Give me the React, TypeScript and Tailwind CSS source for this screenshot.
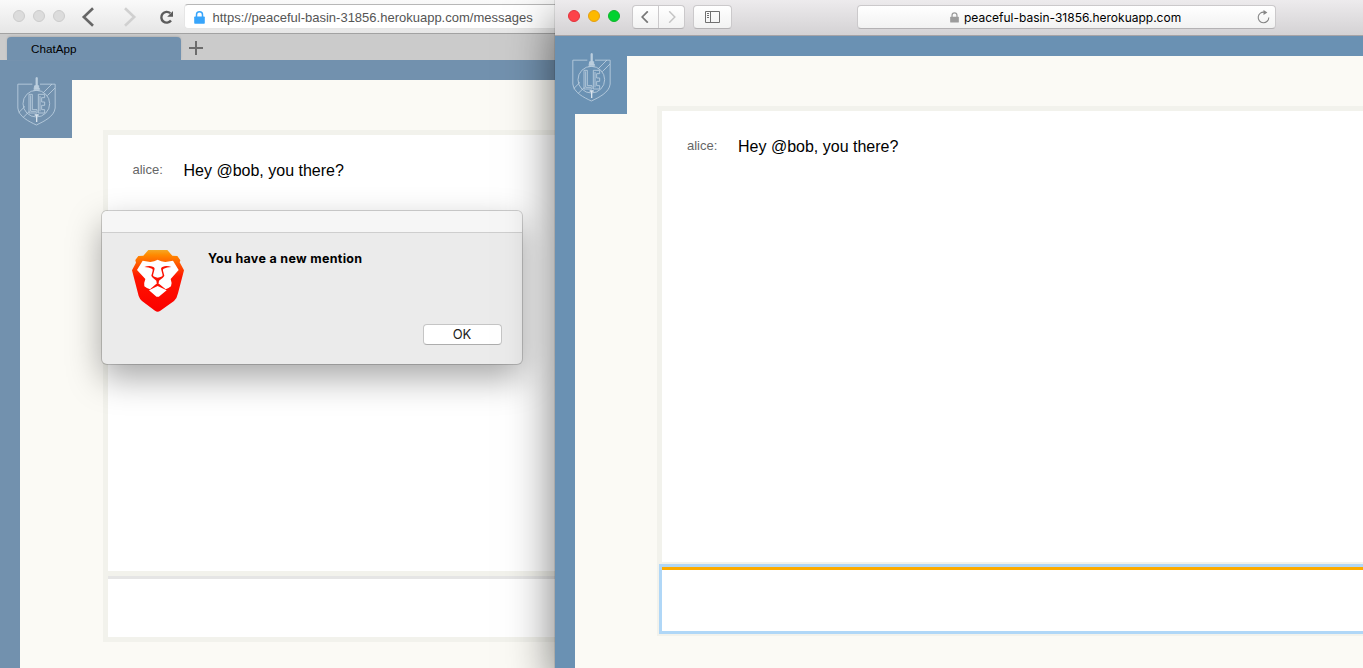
import React from "react";

function Crest() {
  return (
    <svg width="40" height="50" viewBox="0 0 120 150" fill="none" stroke="#bccede" strokeWidth="2.6" className="block">
      <path d="M49 24.5H5.5V96C8 122 40 137 61 147C82 137 115 122 117.5 96V24.5H72" />
      <circle cx="61" cy="83" r="40" />
      <path d="M82 50L108 24M94 59L117 36M8 110L27 91M22 124L40 106" />
      <path d="M39 55H49V101H63V111H39ZM44 58V106H60M67 55H86V65H77V78H86V88H77V101H86V111H67ZM72 60V106" />
      <path d="M60 5H64V34H60ZM56 29H68V34L71 40H54ZM52 43H71" fill="#bccede" />
      <path d="M56 117H68M62 117V138" strokeWidth="4" stroke="#dbe5ee" />
    </svg>
  );
}

function Lion() {
  return (
    <svg width="56" height="66" viewBox="120 144 168 198" className="block">
      <defs>
        <linearGradient id="mane" x1="0" y1="150" x2="0" y2="336" gradientUnits="userSpaceOnUse">
          <stop offset="0" stopColor="#f3a826" />
          <stop offset="0.08" stopColor="#ff8a00" />
          <stop offset="0.43" stopColor="#ff1500" />
          <stop offset="1" stopColor="#fb0000" />
        </linearGradient>
      </defs>
      <path
        d="M175 150H232L247 167L262 168L271 181L269 187L282 211L264 280Q261 295 252 303L211 332Q203 338 195 332L156 303Q149 297 146 288L126 211L138 188L136 180L145 168L160 167Z"
        fill="url(#mane)"
      />
      <path
        d="M158 182L181 186Q193 184 203 179Q213 184 226 186L249 182L266 210L242 237Q247 249 243 259Q236 265 227 268L205 250L203 247L201 250L180 268Q170 265 163 259Q161 249 166 237L141 210Z"
        fill="#fff"
      />
      <path d="M203 258L230 271L210 287Q203 294 196 287L177 271Z" fill="#fff" />
      <path
        d="M163 201Q177 196 188 200Q196 203 193 210L189 226Q191 232 203 233Q216 232 218 226L214 210Q211 203 219 200Q230 196 244 201Q230 202 221 206Q218 208 219 212L223 227Q222 231 207 242L206 249H200L199 242Q185 231 184 227L188 212Q189 208 186 206Q177 202 163 201Z"
        fill="#fb1200"
      />
    </svg>
  );
}

function Padlock({ className }: { className: string }) {
  return (
    <svg viewBox="0 0 11 13" className={className}>
      <path d="M2.5 6V3.8a3 3 0 0 1 6 0V6" fill="none" stroke="currentColor" strokeWidth="1.5" />
      <rect x="0.2" y="5.5" width="10.6" height="7.2" rx="0.8" fill="currentColor" />
    </svg>
  );
}

function Message() {
  return (
    <div className="flex whitespace-nowrap pt-[24px]">
      <span className="w-[51px] text-[13px] leading-[22px] text-[#666]">alice:</span>
      <span className="text-[16px] leading-[24px] text-black">Hey @bob, you there?</span>
    </div>
  );
}

function LeftPage() {
  return (
    <div className="flex h-[608px] bg-[#7291ae]">
      <div className="w-[20px] shrink-0" />
      <div className="relative mt-[20px] flex-1 bg-[#fbfaf5] pl-[83px] pt-[50px]">
        <div className="absolute -left-[20px] top-0 h-[58px] w-[72px] bg-[#7291ae] pl-[16px]">
          <div className="-mt-[4px]"><Crest /></div>
        </div>
        <div className="h-[512px] border-y-[5px] border-l-[5px] border-[#f2f2ec] bg-white">
          <div className="h-[436px] pl-[24.5px]"><Message /></div>
          <div className="h-[5px] bg-[#f2f2ec]" />
          <div className="h-[3px] bg-[#e5e5e5]" />
        </div>
      </div>
    </div>
  );
}

function RightPage() {
  return (
    <div className="flex h-[632px] bg-[#6a91b3]">
      <div className="w-[20px] shrink-0" />
      <div className="relative mt-[20px] flex-1 bg-[#fbfaf5] pl-[82px] pt-[50px]">
        <div className="absolute -left-[20px] top-0 h-[58px] w-[72px] bg-[#6a91b3] pl-[16px]">
          <div className="-mt-[4px]"><Crest /></div>
        </div>
        <div className="h-[530px] border-y-[5px] border-l-[5px] border-[#f2f2ec] bg-white">
          <div className="h-[451px] pl-[25px]"><Message /></div>
          <div className="h-[5px] bg-[#f2f2ec]" />
          <div className="h-[64px] border-t-[3px] border-[#fbab00] bg-white shadow-[0_0_0_3px_#b0d7f7]" />
        </div>
      </div>
    </div>
  );
}

function LeftWindow() {
  return (
    <div className="w-[555px] shrink-0 overflow-hidden">
      <div className="flex h-[34px] items-center border-b border-[#a2a2a2] bg-linear-to-b from-[#fafafa] to-[#e6e6e6]">
        <div className="flex gap-[8px] pb-px pl-[13px]">
          <i className="size-[12px] rounded-full border border-[#cccccc] bg-[#dcdcdc]" />
          <i className="size-[12px] rounded-full border border-[#cccccc] bg-[#dcdcdc]" />
          <i className="size-[12px] rounded-full border border-[#cccccc] bg-[#dcdcdc]" />
        </div>
        <svg width="119" height="32" viewBox="0 0 119 32" fill="none" className="shrink-0">
          <path d="M28 7.2L18.8 16L28 24.8" stroke="#666" strokeWidth="2.6" />
          <path d="M60 7.2L69.2 16L60 24.8" stroke="#d0d0d0" strokeWidth="2.6" />
          <path d="M105.3 12.2A5.4 5.4 0 1 0 106 19.6" stroke="#5b5b5b" strokeWidth="2.4" />
          <path d="M108 10V15.7H102.2Z" fill="#5b5b5b" />
        </svg>
        <div className="mt-[-1px] flex h-[25px] flex-1 items-center rounded-l-[4px] border-y border-l border-[#e6e6e6] border-t-[#b7b7b7] bg-white pl-[8.5px]">
          <Padlock className="mt-[2px] h-[13px] w-[11px] shrink-0 text-[#38a5fb]" />
          <span className="ml-[8px] mt-[3px] whitespace-nowrap text-[13px] text-[#555]">https://peaceful-basin-31856.herokuapp.com/messages</span>
        </div>
      </div>
      <div className="flex h-[26px] items-end bg-[#cbcbcb] pl-[7px]">
        <div className="h-[23px] w-[174px] rounded-t-[4px] bg-[#7291ae] pl-[24px] text-[11.7px] leading-[24px] text-black shadow-[0_-1px_2px_#b4b4b4]">ChatApp</div>
        <svg width="14" height="14" viewBox="0 0 14 14" className="mb-[5px] ml-[7.5px]">
          <path d="M0 7H14M7 0V14" stroke="#6c6c6c" strokeWidth="2" />
        </svg>
      </div>
      <LeftPage />
    </div>
  );
}

function RightWindow() {
  return (
    <div className="relative z-20 min-w-0 flex-1 shadow-[0_18px_44px_rgba(0,0,0,0.55),0_0_1px_rgba(0,0,0,0.5)]">
      <div className="flex h-[36px] items-start border-b border-[#a6a3a6] bg-linear-to-b from-[#edebed] to-[#d4d2d4] pl-[13px] pt-[5px]">
        <div className="flex gap-[8px] pt-[5px]">
          <i className="size-[12px] rounded-full border border-[#e2333d] bg-[#fd4249]" />
          <i className="size-[12px] rounded-full border border-[#e49f14] bg-[#fdb900]" />
          <i className="size-[12px] rounded-full border border-[#11b52c] bg-[#00d22f]" />
        </div>
        <div className="ml-[12px] flex h-[24px] w-[53px] rounded-[4px] border border-[#cbc9cb] border-b-[#b4b2b4] bg-linear-to-b from-white to-[#f2f2f2]">
          <div className="flex flex-1 items-center justify-center border-r border-[#cbc9cb]">
            <svg width="8" height="12" viewBox="0 0 8 12" fill="none" stroke="#777" strokeWidth="1.7" className="-ml-px"><path d="M6.8 .3L1.2 6L6.8 11.7" /></svg>
          </div>
          <div className="flex flex-1 items-center justify-center">
            <svg width="8" height="12" viewBox="0 0 8 12" fill="none" stroke="#c4c4c4" strokeWidth="1.5"><path d="M1.2 .3L6.8 6L1.2 11.7" /></svg>
          </div>
        </div>
        <div className="ml-[8px] flex h-[24px] w-[39px] items-center justify-center rounded-[4px] border border-[#cbc9cb] border-b-[#b4b2b4] bg-linear-to-b from-white to-[#f2f2f2]">
          <svg width="15" height="12" viewBox="0 0 15 12" fill="none" stroke="#707070" strokeWidth="1">
            <path d="M.5 .5H14.5V11.5H.5ZM5.5 .5V11.5M2 2.5H4M2 4.5H4M2 6.5H4" />
          </svg>
        </div>
        <div className="ml-[125px] flex h-[24px] w-[419px] items-center rounded-[4px] border border-[#cbc9cb] border-b-[#b4b2b4] bg-linear-to-b from-white to-[#f2f2f2] pl-[92px] pr-[5px]">
          <Padlock className="h-[11px] w-[9px] shrink-0 text-[#9c9c9c]" />
          <span className="ml-[5px] mt-[2px] flex-1 whitespace-nowrap font-[Inter,sans-serif] text-[12px] text-black">peaceful-basin-31856.herokuapp.com</span>
          <svg width="13" height="14" viewBox="0 0 13 14" fill="none" stroke="#858585" strokeWidth="1.1">
            <path d="M7.5 2.2A5.3 5.3 0 1 0 11.8 7.4" />
            <path d="M6.5 .1L10.4 2.4L6.5 4.9Z" fill="#858585" stroke="none" />
          </svg>
        </div>
      </div>
      <RightPage />
    </div>
  );
}

function MentionDialog() {
  return (
    <div className="absolute left-[102px] top-[211px] z-10 flex h-[153px] w-[420px] flex-col rounded-[5px] bg-[#ebebeb] font-[Inter,sans-serif] shadow-[0_0_0_1px_rgba(0,0,0,0.17),0_14px_34px_rgba(0,0,0,0.35)]">
      <div className="h-[22px] rounded-t-[5px] border-b border-[#cecece] bg-[#f6f6f6]" />
      <div className="flex flex-1 pl-[28px] pt-[15px]">
        <Lion />
        <div className="ml-[22px] mt-[2px] whitespace-nowrap text-[12.5px] font-bold leading-[18px] tracking-[0.31px] text-black">You have a new mention</div>
      </div>
      <button className="mb-[19px] mr-[20px] h-[21px] w-[79px] self-end rounded-[4px] border border-[#c5c5c5] border-b-[#adadad] bg-white pr-px text-[13px] leading-[19px] text-[#222]">OK</button>
    </div>
  );
}

export default function App() {
  return (
    <div className="relative flex h-[668px] w-[1363px] overflow-hidden font-['Liberation_Sans',Arial,sans-serif]">
      <LeftWindow />
      <MentionDialog />
      <RightWindow />
    </div>
  );
}
